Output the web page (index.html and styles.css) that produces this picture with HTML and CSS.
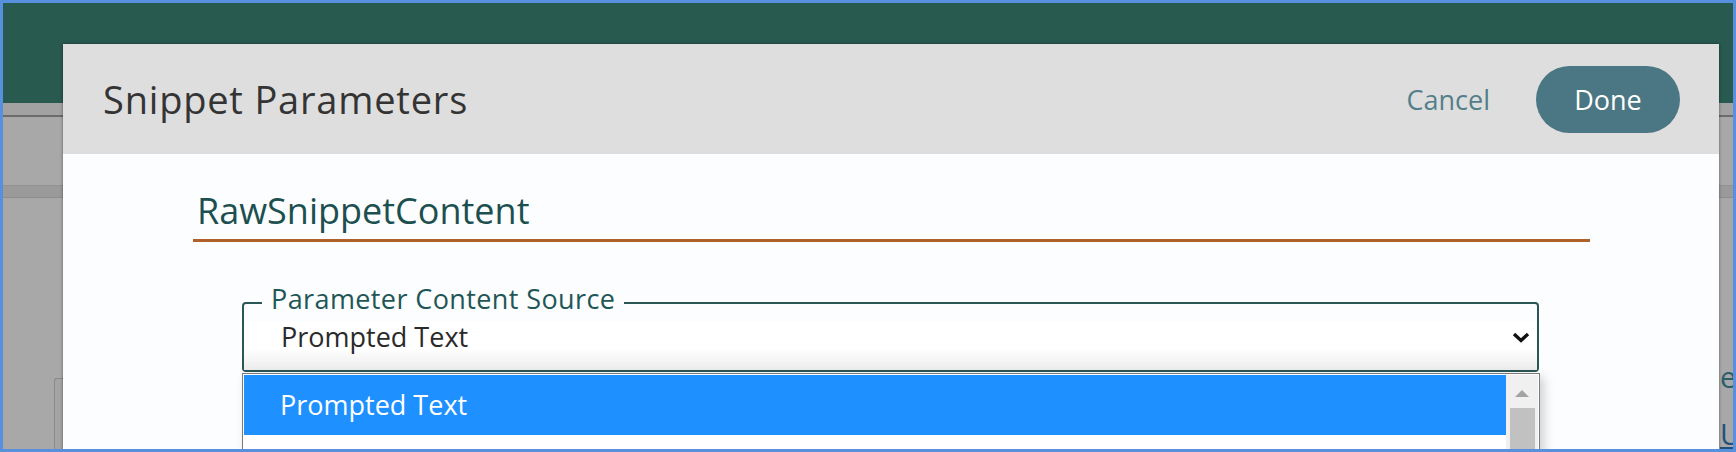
FILE: index.html
```html
<!DOCTYPE html>
<html lang="en">
<head>
  <meta charset="UTF-8">
  <title>Snippet Parameters</title>
  <link rel="stylesheet" href="styles.css">
</head>
<body>
  <div class="screen">
    <div class="app">
      <div class="topbar"></div>
      <div class="toolbar"></div>
      <div class="gap"></div>
      <div class="subbar"></div>
      <div class="workspace">
        <div class="side-card"></div>
        <div class="peek">
          <div class="peek-label">efault</div>
          <a class="peek-link" href="#">URL</a>
        </div>
      </div>
    </div>

    <div class="modal">
      <div class="modal-head">
        <h1 class="modal-title">Snippet Parameters</h1>
        <div class="actions">
          <a class="cancel" href="#">Cancel</a>
          <button class="done">Done</button>
        </div>
      </div>

      <div class="modal-body">
        <h2 class="section">RawSnippetContent</h2>

        <fieldset class="field">
          <legend>Parameter Content Source</legend>
          <div class="select">
            <span class="value">Prompted Text</span>
            <svg class="chevron" width="18" height="11" viewBox="0 0 18 11">
              <polyline points="2,2 9,8.5 16,2" fill="none" stroke="#111" stroke-width="3.4"/>
            </svg>
          </div>
        </fieldset>

        <div class="dropdown">
          <ul class="options">
            <li class="active">Prompted Text</li>
            <li></li>
          </ul>
          <div class="scrollbar">
            <div class="arrow-up"></div>
            <div class="thumb"></div>
          </div>
        </div>
      </div>
    </div>
  </div>
</body>
</html>
```

FILE: styles.css
```css
body {
  margin: 0;
  font-family: 'Open Sans', sans-serif;
  background-color: #ffffff;
}
.screen {
  position: relative;
  width: 1736px;
  height: 452px;
  box-sizing: border-box;
  border: 3px solid #5790dc;
  overflow: hidden;
  background-color: #a8a8a8;
}

/* page behind the dialog */
.topbar {
  height: 100px;
  background-color: #295a4f;
}
.toolbar {
  height: 12px;
  background-color: #a2a2a2;
  border-bottom: 2px solid #6c6c6c;
}
.gap {
  height: 68px;
}
.subbar {
  height: 11px;
  background-color: #9a9a9a;
  border-top: 1px solid #939393;
  border-bottom: 1px solid #8e8e8e;
}
.workspace {
  display: flex;
  height: 260px;
}
.side-card {
  margin: 180px 0 0 51px;
  width: 12px;
  border: 1px solid #8a8a8a;
  border-right: none;
  border-radius: 3px 0 0 0;
  background-color: #a4a4a4;
}
.peek {
  margin-left: auto;
  width: 13px;
  overflow: hidden;
  white-space: nowrap;
  padding-top: 150px;
  font-size: 29px;
  line-height: 57px;
}
.peek-label {
  color: #2b5f68;
}
.peek-link {
  color: #23507a;
}

/* dialog */
.modal {
  position: absolute;
  left: 60px;
  top: 41px;
  width: 1656px;
  height: 420px;
  background-color: #fcfdff;
  box-shadow: 0 0 3px rgba(0,0,0,0.45);
}
.modal-head {
  height: 110px;
  background-color: #dedede;
  display: flex;
  align-items: center;
  justify-content: space-between;
  padding: 0 39px 0 40px;
}
.modal-title {
  margin: 0;
  font-size: 38px;
  font-weight: normal;
  letter-spacing: 0.8px;
  color: #343434;
}
.actions {
  display: flex;
  align-items: center;
  gap: 46px;
}
.cancel {
  font-size: 27px;
  color: #547f8a;
  text-decoration: none;
}
.done {
  width: 144px;
  height: 67px;
  border: none;
  border-radius: 34px;
  background-color: #4b7683;
  color: white;
  font-family: 'Open Sans', sans-serif;
  font-size: 27px;
  padding: 0;
}

.section {
  margin: 36px 129px 0 130px;
  padding: 0 0 7px 4px;
  font-size: 36px;
  line-height: 42px;
  font-weight: normal;
  color: #1c4f50;
  border-bottom: 3px solid #b0602a;
}

.field {
  margin: 42px 180px 0 179px;
  padding: 0;
  border: 2px solid #2b5656;
  border-radius: 4px;
}
.field legend {
  margin-left: 18px;
  padding: 0 9px 8px;
  font-size: 27px;
  line-height: 30px;
  letter-spacing: 0.4px;
  color: #1f5656;
}
.select {
  height: 48px;
  display: flex;
  align-items: flex-start;
  justify-content: space-between;
  padding: 0 7px 0 37px;
  background: linear-gradient(to bottom, #ffffff 55%, #ececec);
}
.value {
  font-size: 27px;
  line-height: 30px;
  color: #2a2a2a;
}
.chevron {
  margin-top: 10px;
}

.dropdown {
  margin: 1px 179px 0 179px;
  border: 1px solid #7a7a7a;
  padding: 1px 1px 0;
  display: flex;
  background-color: white;
  box-shadow: 4px 4px 10px rgba(0,0,0,0.18);
}
.options {
  flex: 1;
  list-style: none;
  margin: 0;
  padding: 0;
}
.options li {
  height: 60px;
  line-height: 60px;
  padding-left: 36px;
  font-size: 27px;
  color: #222;
}
.options li.active {
  background-color: #1e90ff;
  color: white;
}
.scrollbar {
  width: 32px;
  background-color: #f0f0f0;
  display: flex;
  flex-direction: column;
  align-items: center;
}
.arrow-up {
  margin-top: 15px;
  width: 0;
  height: 0;
  border-left: 7px solid transparent;
  border-right: 7px solid transparent;
  border-bottom: 7px solid #a3a3a3;
}
.thumb {
  margin-top: 11px;
  width: 25px;
  height: 80px;
  background-color: #c1c1c1;
}
```
